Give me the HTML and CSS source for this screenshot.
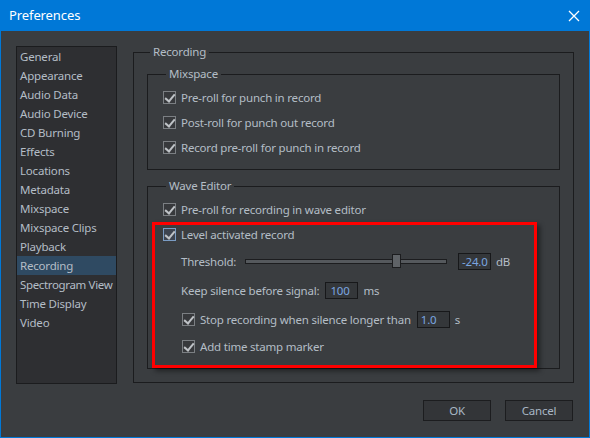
FILE: index.html
```html
<!DOCTYPE html>
<html>
<head>
<meta charset="utf-8">
<link rel="stylesheet" href="styles.css">
</head>
<body>
<div class="window">
  <div class="titlebar">
    <span class="title">Preferences</span>
    <svg class="close" width="12" height="12" viewBox="0 0 12 12"><path d="M1 1 L11 11 M11 1 L1 11" stroke="#fff" stroke-width="1.3" fill="none"/></svg>
  </div>
  <div class="body">
    <div class="main">
      <ul class="list">
        <li>General</li>
        <li>Appearance</li>
        <li>Audio Data</li>
        <li>Audio Device</li>
        <li>CD Burning</li>
        <li>Effects</li>
        <li>Locations</li>
        <li>Metadata</li>
        <li>Mixspace</li>
        <li>Mixspace Clips</li>
        <li>Playback</li>
        <li class="sel">Recording</li>
        <li class="tight">Spectrogram View</li>
        <li>Time Display</li>
        <li>Video</li>
      </ul>
      <fieldset class="group outer">
        <legend>Recording</legend>
        <fieldset class="group inner mix">
          <legend>Mixspace</legend>
          <div class="row"><span class="cb"></span>Pre-roll for punch in record</div>
          <div class="row"><span class="cb"></span>Post-roll for punch out record</div>
          <div class="row"><span class="cb"></span>Record pre-roll for punch in record</div>
        </fieldset>
        <fieldset class="group inner wave">
          <legend>Wave Editor</legend>
          <div class="row"><span class="cb"></span>Pre-roll for recording in wave editor</div>
          <div class="row"><span class="cb focus"></span>Level activated record</div>
          <div class="row sub r-thresh">
            <span class="lbl-thresh">Threshold:</span>
            <span class="slider"><span class="track"></span><span class="thumb"></span></span>
            <span class="box box-thresh">-24.0</span><span class="unit">dB</span>
          </div>
          <div class="row sub r-keep">
            <span>Keep silence before signal:</span>
            <span class="box box-keep">100</span><span class="unit">ms</span>
          </div>
          <div class="row subcb r-stop"><span class="cb"></span>Stop recording when silence longer than
            <span class="box box-stop">1.0</span><span class="unit">s</span>
          </div>
          <div class="row subcb r-add"><span class="cb"></span>Add time stamp marker</div>
        </fieldset>
      </fieldset>
    </div>
    <div class="buttons">
      <button class="btn">OK</button>
      <button class="btn">Cancel</button>
    </div>
  </div>
  <div class="redbox"></div>
</div>
</body>
</html>
```
FILE: styles.css
```css
* { box-sizing: border-box; }
html, body { margin: 0; padding: 0; background: #3a3d40; }
body {
  font-family: "Noto Sans", "DejaVu Sans", sans-serif;
  font-size: 11.5px;
  letter-spacing: -0.2px;
  color: #b4bdc6;
}
.window {
  position: relative;
  width: 590px;
  height: 438px;
  background: #3a3d40;
  border: 1px solid #0078d7;
  border-top: none;
  display: flex;
  flex-direction: column;
}
.titlebar {
  height: 31px;
  margin: 0 -1px;
  background: #0078d7;
  display: flex;
  align-items: center;
  justify-content: space-between;
  padding: 0 10px 0 9px;
}
.title {
  color: #fff;
  font-size: 13px;
  letter-spacing: -0.1px;
  line-height: 16px;
  padding-bottom: 1px;
}
.close { display: block; margin-right: 0; }
.body {
  padding: 14px 15px 0 15px;
  display: flex;
  flex-direction: column;
}
.main {
  display: flex;
  align-items: flex-start;
}
.list {
  list-style: none;
  margin: 1px 0 0 0;
  padding: 0;
  width: 101px;
  height: 338px;
  background: #2e2f32;
  border: 1px solid #1b1c1e;
}
.list li {
  height: 19px;
  line-height: 19px;
  padding-left: 3px;
  white-space: nowrap;
}
.list li.tight { letter-spacing: -0.35px; }
.list li.sel { background: #2f4a62; }
.group {
  margin: 0;
  padding: 0;
  border: 1px solid #1b1c1e;
  min-width: 0;
}
.group legend {
  padding: 0 3px;
  line-height: 14px;
  height: 14px;
}
.outer {
  margin-left: 16px;
  width: 441px;
  padding: 0 13px 13px 13px;
}
.outer > legend { margin-left: 3px; }
.inner { width: 413px; }
.inner > legend { margin-left: 3px; }
.mix { margin-top: 8px; padding: 4px 0 9px 15px; }
.wave { margin-top: 9px; padding: 4px 0 9px 15px; }
.row {
  height: 25px;
  display: flex;
  align-items: center;
  white-space: nowrap;
}
.cb {
  width: 13px;
  height: 13px;
  border: 1px solid #7b7f83;
  background: #37393c;
  margin-right: 5px;
  flex: none;
  position: relative;
}
.cb::after {
  content: "";
  position: absolute;
  left: 3px;
  top: 0px;
  width: 4px;
  height: 8px;
  border-right: 2px solid #bfc3c7;
  border-bottom: 2px solid #bfc3c7;
  transform: rotate(40deg);
}
.cb.focus { border-color: #7a9cc4; background: #3d4450; }
.sub { padding-left: 18px; }
.subcb { padding-left: 19px; }
.r-thresh { height: 28px; }
.r-keep { height: 30px; }
.r-stop { height: 28px; }
.r-add { height: 26px; }
.lbl-thresh { width: 64px; }
.slider {
  position: relative;
  width: 202px;
  height: 14px;
  display: flex;
  align-items: center;
}
.track {
  display: block;
  width: 100%;
  height: 5px;
  background: #55595d;
  border: 1px solid #1c1d1f;
}
.thumb {
  position: absolute;
  left: 147px;
  top: 0;
  width: 9px;
  height: 14px;
  background: #5f6367;
  border: 1px solid #1c1d1f;
}
.box {
  display: inline-block;
  height: 17px;
  line-height: 15px;
  width: 33px;
  border: 1px solid #17181a;
  background: #34373a;
  color: #7aa6e0;
  padding-left: 3px;
  flex: none;
}
.box-thresh { margin-left: 11px; padding-left: 3px; }
.box-keep { margin-left: 6px; padding-left: 4px; }
.box-stop { margin-left: 6px; padding-left: 3px; }
.unit { margin-left: 5px; }
.buttons {
  display: flex;
  justify-content: flex-end;
  gap: 14px;
  margin-top: 16px;
  padding-right: 1px;
}
.btn {
  width: 68px;
  height: 21px;
  background: #333538;
  border: 1px solid #1c1d1f;
  color: #a9b7c5;
  font-family: "Noto Sans", "DejaVu Sans", sans-serif;
  font-size: 11.5px;
  letter-spacing: -0.2px;
  padding: 0;
  line-height: 19px;
}
.redbox {
  position: absolute;
  left: 151px;
  top: 222px;
  width: 385px;
  height: 146px;
  border: 3px solid #ff0000;
  box-shadow: 3px 3px 5px rgba(0,0,0,0.45);
  pointer-events: none;
}
```
